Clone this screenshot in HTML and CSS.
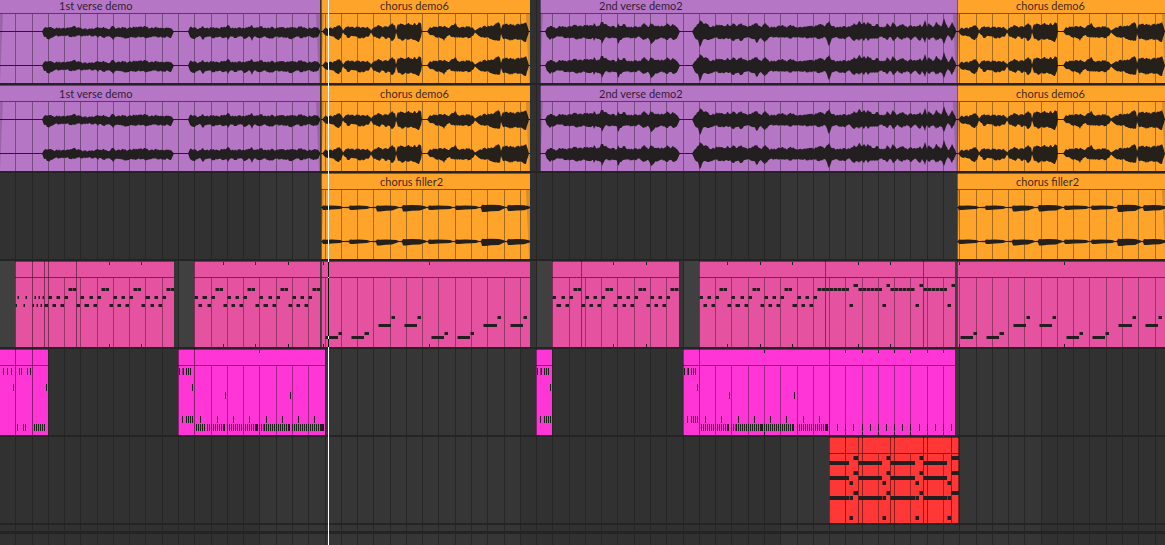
FILE: index.html
```
<!DOCTYPE html>
<html>
	<head>
		<meta charset="UTF-8" />
		<meta name="viewport" content="width=device-width" />
		<title>Arrangement</title>
		<link rel="stylesheet" href="styles.css">
	</head>
	<body>
		<div id="arrangement">
			<div class="lane first"></div>
			<div class="lane"></div>
			<div class="lane"></div>
			<div class="lane selected"></div>
			<div class="lane"></div>
			<div class="lane"></div>
			<div class="lane small"></div>
			<div class="lane last"></div>
			<div id="playhead"></div>
		</div>
		<script src="arrangement.js"></script>
	</body>
</html>
```

FILE: styles.css
```
* {
	box-sizing: border-box;
}

body {
	margin: 0;
	overflow: hidden;
	background-color: #242424;
	font-family: "Lato", "Open Sans", sans-serif;
}

#arrangement {
	position: relative;
	display: flex;
	flex-direction: column;
	width: 1165px;
	height: 545px;
	overflow: hidden;
}

.lane {
	position: relative;
	flex: none;
	height: 86px;
	margin-bottom: 2px;
	background-color: #313131;
}

.lane.first {
	margin-top: -3px;
}

.lane.selected {
	background-color: #404040;
}

.lane.small {
	height: 6px;
	margin-bottom: 3px;
}

.lane.last {
	height: 11px;
	margin-bottom: 0;
}

.grid {
	display: block;
}

.grid .band {
	fill: #363636;
}

.grid .beat {
	fill: #262626;
}

.grid .stub {
	fill: #353535;
}

/* clips sit freely on the time axis */
.clip {
	position: absolute;
	top: 0;
	height: 86px;
	overflow: hidden;
	color: #231e20;
}

.clip.purple {
	background-color: #b576c6;
}

.clip.orange {
	background-color: #ffa42b;
	color: #25211a;
}

.clip.pink {
	background-color: #e552a0;
}

.clip.magenta {
	background-color: #ff36d5;
}

.clip.red {
	background-color: #ff3737;
}

.clip-name {
	height: 17px;
	padding-left: 59px;
	border-top: 1px solid rgba(0, 0, 0, 0.45);
	border-bottom: 1px solid rgba(0, 0, 0, 0.5);
	color: rgba(20, 10, 20, 0.85);
	font-size: 11px;
	line-height: 15px;
	letter-spacing: 0;
	white-space: nowrap;
}

.clip svg {
	position: absolute;
	top: 0;
	left: 0;
}

.clip .beat {
	fill: rgba(0, 0, 0, 0.35);
}

.clip .section {
	fill: rgba(0, 0, 0, 0.45);
}

.clip .fade {
	fill: rgba(0, 0, 0, 0.15);
}

.clip .ink {
	fill: currentColor;
}

.clip .edge {
	fill: currentColor;
	opacity: 0.5;
}

#playhead {
	position: absolute;
	top: 0;
	left: 328px;
	width: 1px;
	height: 545px;
	background: linear-gradient(#fff 262px, #000 262px, #000 277px, #fff 277px, #fff 278px, #000 278px, #000 336px, #fff 336px, #fff 339px, #000 339px, #000 347px, #fff 347px);
}
```

FILE: arrangement.js
```
const WIDTH = 1165;
const BEAT = 16.276;
const ORIGIN = 15.76;

const beats = [];
for (let k = 0; ORIGIN + k * BEAT < WIDTH; k++) {
	beats.push(Math.floor(ORIGIN + k * BEAT));
}

function rect(cls, x, y, w, h) {
	return `<rect class="${cls}" x="${x}" y="${y}" width="${w}" height="${h}"/>`;
}

// lanes: light and dark bands of 16 beats, one line for each beat
document.querySelectorAll(".lane").forEach((lane) => {
	const h = lane.clientHeight;
	let out = "";
	if (lane.classList.contains("selected")) {
		out += rect("stub", 174, 0, 4, h) + rect("stub", 530, 0, 6, h) + rect("stub", 679, 0, 4, h);
	} else {
		out += rect("band", 259, 0, 261, h) + rect("band", 780, 0, 261, h);
	}
	beats.forEach((x) => { out += rect("beat", x, 0, 1, h); });
	lane.innerHTML = `<svg class="grid" width="${WIDTH}" height="${h}" shape-rendering="crispEdges">${out}</svg>`;
});

// opt: name, lines (full height), ticks, art (svg in lane coordinates)
function addClip(lane, color, from, to, opt) {
	const lines = opt.lines || [];
	let out = "";
	beats.forEach((x) => {
		if (x > from && x < to && !lines.includes(x)) out += rect("beat", x, 17, 1, 69);
	});
	if (!opt.noEdge) out += rect("section", from, 0, 1, 86);
	lines.forEach((x) => { out += rect("section", x, 0, 1, 86); });
	(opt.ticks || []).forEach((x) => {
		out += rect("ink", x, 1, 1, 3) + rect("ink", x, 83, 1, 3);
	});
	out = `<g shape-rendering="crispEdges">${out}${opt.notes || ""}</g>${opt.wave || ""}`;

	const clip = document.createElement("div");
	clip.className = "clip " + color;
	clip.style.left = from + "px";
	clip.style.width = (to - from) + "px";
	clip.innerHTML = `<div class="clip-name">${opt.name || ""}</div>` +
		`<svg width="${to - from}" height="86" viewBox="${from} 0 ${to - from} 86">${out}</svg>`;
	document.querySelectorAll(".lane")[lane].appendChild(clip);
}

/* ---- audio ---- */

// each point: x, height above the axis, height below it
const verse1 = [
	[42,0,0],[44,3,5],[48,4,7],[50,4,7],[53,3,5],[60,3,4],[66,3,4],[72,4,5],[74,5,5],[80,3,4],[88,2,4],[96,3,4],[98,4,6],[101,3,4],[104,4,6],[108,2,4],[113,5,8],[115,3,5],[118,3,5],[122,4,6],[128,3,6],[130,4,5],[133,4,6],[138,4,5],[145,5,6],[150,3,5],[155,4,5],[160,3,5],[165,3,6],[168,3,5],[171,3,6],[174,0,0],
	[188,0,0],[190,4,5],[194,4,7],[198,2,5],[201,3,5],[203,5,8],[205,3,5],[208,3,5],[213,4,6],[218,3,5],[222,4,6],[226,4,5],[228,6,8],[230,4,5],[232,3,5],[236,3,6],[240,4,4],[244,3,7],[248,4,5],[250,4,5],[252,6,9],[254,3,5],[256,3,5],[260,5,6],[266,3,5],[272,4,7],[276,3,5],[281,4,5],[286,3,6],[292,4,7],[296,3,5],[301,5,6],[306,3,5],[312,3,5],[314,4,6],[318,3,5],[320,1,1]
];

const verse2 = [
	[545,0,0],[547,3,5],[550,5,8],[554,4,6],[557,3,4],[560,5,5],[566,4,6],[570,5,6],[575,6,7],[580,5,7],[585,6,6],[590,6,7],[593,5,6],[594,8,9],[596,5,6],[599,5,7],[601,9,8],[602,9,12],[605,7,6],[609,5,6],[613,5,6],[617,4,7],[618,8,12],[620,5,8],[624,7,6],[628,4,6],[632,4,6],[636,5,6],[640,4,5],[644,8,8],[648,4,6],[651,8,12],[655,5,8],[659,5,7],[664,5,6],[667,8,8],[670,5,6],[673,7,8],[677,4,6],[680,0,0],
	[692,0,0],[695,4,6],[698,7,8],[700,11,15],[703,8,8],[707,7,8],[711,4,7],[716,6,6],[721,6,7],[724,5,7],[728,7,7],[730,5,6],[733,8,9],[737,5,7],[741,8,9],[745,5,6],[750,5,6],[754,7,7],[757,8,11],[761,4,6],[765,8,10],[769,4,6],[775,4,5],[782,6,6],[786,4,5],[791,6,7],[796,4,5],[803,4,6],[809,5,6],[815,5,6],[820,7,7],[825,5,5],[829,10,14],[832,5,6],[838,4,6],[845,5,7],[850,4,5],[854,8,9],[856,6,7],[859,10,9],[862,7,6],[864,9,9],[866,6,6],[868,9,9],[873,5,6],[877,7,7],[881,4,5],[885,4,6],[887,8,8],[890,4,5],[893,9,9],[897,4,5],[902,7,8],[907,4,5],[911,6,8],[916,4,5],[920,7,9],[922,4,5],[925,11,11],[927,4,5],[929,8,8],[933,4,5],[936,9,9],[940,5,6],[942,6,7],[944,13,12],[948,3,3],[950,5,5],[952,9,9],[956,1,1]
];

const chorus = [
	[0,0,0],[3,3,3],[8,3,4],[13,4,6],[17,6,8],[19,4,6],[21,1,1],[23,3,3],[26,5,6],[30,4,4],[36,4,6],[42,4,6],[46,4,5],[49,1,1],[51,3,4],[55,5,6],[57,6,7],[60,4,4],[64,5,7],[67,5,6],[70,8,9],[73,6,6],[74,1,1],[76,7,7],[80,7,9],[83,6,7],[87,8,8],[90,6,7],[93,8,8],[95,6,9],[97,9,10],[99,8,5],[100,0,0],
	[105,0,0],[108,4,3],[113,4,5],[119,5,6],[122,5,9],[125,4,4],[127,3,3],[129,5,5],[133,8,6],[136,4,5],[142,4,6],[147,5,6],[151,3,4],[153,1,1],[157,3,4],[162,5,6],[167,5,6],[172,6,8],[176,9,9],[178,7,9],[179,2,2],[181,7,7],[184,7,7],[188,7,9],[192,6,7],[197,7,8],[201,7,9],[204,9,10],[206,3,3],[207,0,0]
];

// blobs of the filler: start, end, up, down
const filler = [];
[[0,21,2,2.4],[27,48,2,2.4],[54,77,2,4],[80,105,2.4,4],[106,131,2,2.4],[133,157,2,2.4],[159,184,2.8,4.6],[185,209,2.4,3.6]].forEach(([a, b, up, down]) => {
	filler.push([a, 0.8, 0.8], [a + 1, up, down], [a + 4, up * 0.9, down], [a + 10, up, down * 0.8], [b - 7, up * 0.9, down * 0.75], [b - 3, 1.4, 1.4], [b, 0.6, 0.6]);
});

function wave(points, from, to, shift, rough) {
	const up = [];
	const down = [];
	const teeth = [-0.5, 0.7, 1, -0.2, 0.9, 0.1, -0.6, 0.8, 0.3, 1.1, -0.3];
	points.forEach((p, i) => {
		const next = points[i + 1];
		const fat = rough && p[1] > 1 ? 0.4 : 0;
		up.push([p[0], p[1] + fat]);
		down.push([p[0], p[2] + fat]);
		// small teeth between the peaks
		if (next && rough && (p[1] + next[1]) > 4) {
			for (let x = p[0] + 1; x < next[0]; x++) {
				const t = (x - p[0]) / (next[0] - p[0]);
				up.push([x, p[1] + (next[1] - p[1]) * t + teeth[x % 11]]);
				down.push([x, p[2] + (next[2] - p[2]) * t + teeth[(x * 3) % 11]]);
			}
		}
	});
	let out = "";
	[34.5, 68.5].forEach((axis) => {
		const pts = up.map(([x, v]) => `${x + shift},${axis - v}`)
			.concat(down.map(([x, v]) => `${x + shift},${axis + v}`).reverse());
		out += rect("ink", from, axis - 0.5, to - from, 1) + `<polygon class="ink" points="${pts.join(" ")}"/>`;
	});
	out += `<polygon class="fade" points="${from},17 ${from + 3},17 ${from},86"/>`;
	out += `<polygon class="fade" points="${to},17 ${to - 4},17 ${to - 1},86 ${to},86"/>`;
	return out;
}

[0, 1].forEach((lane) => {
	addClip(lane, "purple", 0, 320, { name: "1st verse demo", noEdge: true, wave: wave(verse1, 0, 320, 0, true) });
	addClip(lane, "orange", 321, 530, { name: "chorus demo6", wave: wave(chorus, 321, 530, 322, true) });
	addClip(lane, "purple", 540, 957, { name: "2nd verse demo2", wave: wave(verse2, 540, 957, 0, true) });
	addClip(lane, "orange", 957, 1166, { name: "chorus demo6", wave: wave(chorus, 957, 1166, 958, true) });
});
addClip(2, "orange", 321, 530, { name: "chorus filler2", wave: wave(filler, 321, 530, 322, false) });
addClip(2, "orange", 957, 1166, { name: "chorus filler2", wave: wave(filler, 957, 1166, 958, false) });

/* ---- midi ---- */

// row of notes as start-end pairs, with a soft left edge
function row(y, h, text, shift = 0) {
	return text.split(" ").map((s) => {
		const [a, b] = s.split("-").map(Number);
		return rect("edge", a + shift, y, 1, h) + rect("ink", a + shift + 1, y, b - a - 1, h);
	}).join("");
}

// a run of notes of four pixels
function run(y, h, ranges) {
	let out = "";
	ranges.forEach(([a, b]) => {
		for (let x = a; x < b; x += 4) out += row(y, h, `${x}-${Math.min(x + 4, b)}`);
	});
	return out;
}

addClip(3, "pink", 15, 174, {
	lines: [32, 44, 48, 76],
	ticks: [109, 141],
	notes: run(27, 3, [[68,76],[101,109],[133,141],[166,174]]) +
		row(35, 3, "17-19 25-27 34-36 38-40 42-44 48-52 56-60 64-68 80-84 89-93 97-101 113-117 121-125 129-133 145-150 154-158 162-166") +
		row(43, 3, "15-17 23-25 32-34 36-38 40-42 44-48 52-56 60-64 76-80 84-89 93-97 109-113 117-121 125-129 141-145 150-154 158-162")
});
addClip(3, "pink", 194, 320, {
	ticks: [223, 255, 288],
	notes: run(27, 3, [[215,223],[247,255],[280,288],[312,320]]) +
		row(35, 3, "194-198 202-207 211-215 227-231 235-239 243-247 259-263 268-272 276-280 292-296 300-304 308-312") +
		row(43, 3, "198-202 207-211 223-227 231-235 239-243 255-259 263-268 272-276 288-292 296-300 304-308")
});
addClip(3, "pink", 552, 679, {
	lines: [581],
	ticks: [613, 646],
	notes: run(27, 3, [[573,581],[605,613],[638,646],[670,679]]) +
		row(35, 3, "552-556 561-565 569-573 585-589 593-597 601-605 617-622 626-630 634-638 650-654 658-662 666-670") +
		row(43, 3, "556-561 565-569 581-585 589-593 597-601 613-617 622-626 630-634 646-650 654-658 662-666")
});
addClip(3, "pink", 699, 955, {
	lines: [825, 923],
	ticks: [727, 760, 792, 858, 890],
	notes: row(23, 3, "853-858 886-890 919-923 951-955") +
		run(27, 3, [[719,727],[752,760],[784,792],[817,849],[858,882],[890,915],[923,947]]) +
		row(35, 3, "699-703 707-711 715-719 731-735 740-744 748-752 764-768 772-776 780-784 797-801 805-809 813-817") +
		row(43, 3, "703-707 711-715 727-731 735-740 744-748 760-764 768-772 776-780 792-797 801-805 809-813 849-853 882-886 915-919 947-951")
});
[[321, 530, 0], [957, 1166, 635]].forEach(([from, to, shift]) => {
	addClip(3, "pink", from, to, {
		ticks: [from + 2, 429 + shift],
		notes: row(55, 3, "391-395 417-421 497-501 523-527", shift) +
			row(63, 3, "378-391 404-417 483-497 510-523", shift) +
			row(71, 3, "338-342 364-369 444-448 470-474", shift) +
			row(75, 3, "325-338 351-364 431-444 457-470", shift)
	});
});

// drum hits, one pixel wide; a range "a-b" is a hit on every second pixel, "a=b" is solid
function hits(y, text) {
	return text.split(" ").map((s) => {
		if (s.includes("=")) {
			const [a, b] = s.split("=").map(Number);
			return rect("ink", a, y, b - a + 1, 7);
		}
		const [a, b] = s.split("-").map(Number);
		let out = "";
		for (let x = a; x <= (b || a); x += 2) out += rect("ink", x, y, 1, 7);
		return out;
	}).join("");
}

addClip(4, "magenta", 0, 48, {
	noEdge: true,
	lines: [15, 32],
	notes: hits(19, "3 7 11 19 21 27 30") + hits(35, "13 46") + hits(75, "17 23 25 34-44")
});
addClip(4, "magenta", 178, 325, {
	lines: [194],
	ticks: [259],
	notes: hits(19, "179 183 186-190") + rect("edge", 182, 19, 1, 7) + hits(35, "192") + hits(43, "225 290") +
		hits(67, "182 186-192 200 217 233 249 266 282 298 314") +
		hits(75, "196-204 207-221 223=224 227-253 255=257 259-261 264-286 288=289 292-318 320=323") +
		rect("edge", 263, 75, 1, 7)
});
addClip(4, "magenta", 536, 552, {
	notes: hits(19, "537 541 544-548") + rect("edge", 540, 19, 1, 7) + hits(35, "550") + hits(67, "540 544-550")
});
addClip(4, "magenta", 683, 955, {
	lines: [699, 829],
	ticks: [764, 845, 862, 878, 894, 910, 927, 943],
	notes: hits(19, "684 688 691-695") + rect("edge", 687, 19, 1, 7) + hits(35, "697") + hits(43, "729 794") +
		hits(67, "687 691-697 705 721 738 754 770 786 803 819") +
		hits(75, "701-725 727=728 731-733 736-758 760=762 764-790 792=793 797-823 825=827") +
		rect("edge", 735, 75, 1, 7) +
		hits(75, "837 845 853 862 870 878 886 894 902 910 919 927 935 943 951")
});

const stabs = "853-858 886-890 919-923 951-959";
const chords = "829-849 858-882 890-915 923-947";
const offs = "849-853 882-886 915-919 947-951";
addClip(5, "red", 829, 959, {
	lines: [845, 858, 862, 890, 894, 923, 927, 951, 958],
	notes: row(19, 4, stabs) + row(24, 4, chords) + row(34, 4, stabs) + row(39, 4, chords) +
		row(44, 4, offs) + row(54, 4, stabs) + row(59, 4, chords) + row(59, 4, offs) + row(79, 4, offs)
});
```
